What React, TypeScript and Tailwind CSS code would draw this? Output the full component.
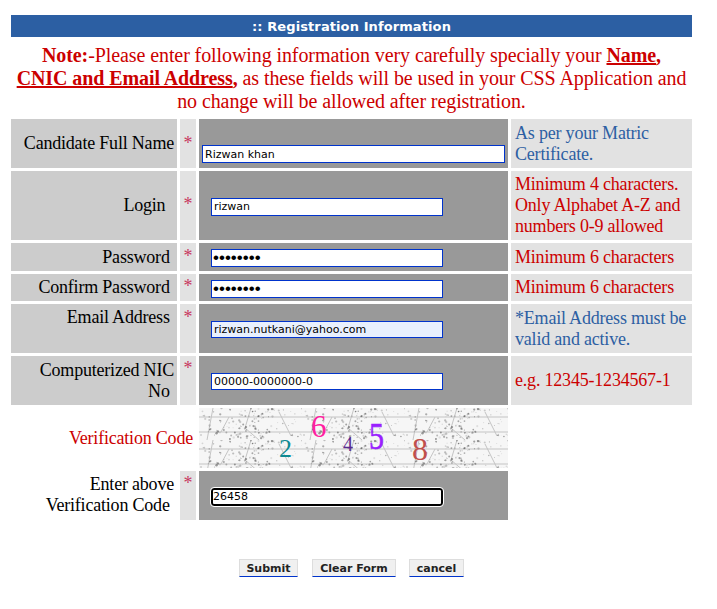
import type { ReactNode } from "react";

const serif = "font-['Liberation_Serif',serif]";
const sans = "font-['DejaVu_Sans',sans-serif]";

// cheap seeded noise for the captcha background tile
function noiseDots(count: number) {
  const dots: { x: number; y: number; r: number; o: number }[] = [];
  let seed = 4211;
  const next = () => {
    seed = (seed * 16807) % 2147483647;
    return seed / 2147483647;
  };
  for (let i = 0; i < count; i++) {
    const clustered = next() > 0.6;
    dots.push({
      x: clustered ? 30 + next() * 40 : next() * 103,
      y: next() * 31,
      r: 0.4 + next() * 0.8,
      o: 0.12 + next() * 0.5,
    });
  }
  return dots;
}

function Captcha() {
  return (
    <svg width="309" height="60" className="block">
      <defs>
        <pattern id="noise" width="103" height="32" patternUnits="userSpaceOnUse">
          <rect width="103" height="32" fill="#f6f6f6" />
          <path
            d="M0 9H103M0 24H103M14 0L8 32M52 0L46 20L60 32M80 4L92 28M30 9L22 24"
            stroke="#c4c4c4"
            strokeWidth="1"
            fill="none"
          />
          {noiseDots(150).map((d, i) => (
            <circle key={i} cx={d.x} cy={d.y} r={d.r} fill="#555" opacity={d.o} />
          ))}
        </pattern>
      </defs>
      <rect width="309" height="60" fill="url(#noise)" />
      <g fontFamily="'Liberation Serif', serif">
        <text x="80" y="49" fontSize="26" fill="#0f8a92">2</text>
        <text x="112" y="29" fontSize="31" fill="#ff1fa0">6</text>
        <text x="144" y="43" fontSize="20" fill="#5a2a90">4</text>
        <text
          x="170"
          y="41"
          fontSize="38"
          fill="#9a1fff"
          stroke="#9a1fff"
          strokeWidth="0.6"
          textLength="15"
          lengthAdjust="spacingAndGlyphs"
        >
          5
        </text>
        <text x="213" y="52" fontSize="32" fill="#c0504d">8</text>
      </g>
    </svg>
  );
}

function Input({
  value,
  className = "h-[17px] w-[232px]",
}: {
  value: string;
  className?: string;
}) {
  return (
    <input
      readOnly
      value={value}
      className={`block border border-[#0033cc] bg-white px-[2px] text-[11px] text-black outline-none ${sans} ${className}`}
    />
  );
}

// chrome draws the dots from the field's font, Liberation gets the reference's size
function PasswordInput() {
  return (
    <input
      readOnly
      type="password"
      value="password"
      className="block h-[18px] w-[232px] border border-[#0033cc] bg-white px-[1px] text-[17px] text-black outline-none font-['Liberation_Sans',sans-serif]"
    />
  );
}

function Label({ children, className = "items-center" }: { children: ReactNode; className?: string }) {
  return (
    <div className={`flex justify-end bg-[#cccccc] pr-[3px] text-right text-[18px] leading-[21px] tracking-[-0.2px] text-black ${className}`}>
      <span>{children}</span>
    </div>
  );
}

function Star({ className }: { className: string }) {
  return (
    <div className={`bg-[#e2e2e2] text-center text-[18px] leading-[21px] text-[#c8385f] ${className}`}>*</div>
  );
}

function Hint({ children, red = false }: { children: ReactNode; red?: boolean }) {
  return (
    <div
      className={`flex items-center bg-[#e2e2e2] pl-[4px] text-[18px] leading-[21px] tracking-[-0.2px] ${red ? "text-[#cc0000]" : "text-[#2d5fa3]"}`}
    >
      <span>{children}</span>
    </div>
  );
}

function Btn({ children, className }: { children: ReactNode; className: string }) {
  return (
    <button
      type="button"
      className={`h-[18px] border border-[#dddddd] border-b-[#0033cc] bg-[#f0f0f0] text-[11px] leading-none font-bold text-[#222222] ${sans} ${className}`}
    >
      {children}
    </button>
  );
}

export default function App() {
  return (
    <div className={`h-[609px] w-[717px] overflow-hidden bg-white px-[11px] pt-[15px] ${serif}`}>
      <div className={`flex h-[22px] w-[681px] items-center justify-center bg-[#2c5fa3] pt-[1px] text-[13px] font-bold tracking-[0.1px] text-white ${sans}`}>
        :: Registration Information
      </div>

      <p className="mt-[7px] w-[681px] text-center text-[20px] leading-[23px] tracking-[-0.09px] whitespace-nowrap text-[#cc0000]">
        <b>Note:</b>-Please enter following information very carefully specially your <u className="font-bold">Name</u>
        <b>,</b>
        <br />
        <u className="font-bold">CNIC and Email Address</u>
        <b>,</b> as these fields will be used in your CSS Application and
        <br />
        no change will be allowed after registration.
      </p>

      <div className="mt-[6px] grid w-[681px] grid-cols-[166px_16px_309px_181px] grid-rows-[49px_69px_28px_27px_49px_49px_60px_49px] gap-[3px]">
        <Label>Candidate Full Name</Label>
        <Star className="pt-[14px]" />
        <div className="flex items-end bg-[#999999] pb-[5px] pl-[3px]">
          <Input value="Rizwan khan" className="h-[18px] w-[303px]" />
        </div>
        <Hint>As per your Matric Certificate.</Hint>

        <Label>Login&nbsp;&nbsp;</Label>
        <Star className="pt-[23px]" />
        <div className="flex items-center bg-[#999999] pt-[2px] pl-[12px]">
          <Input value="rizwan" className="h-[18px] w-[232px]" />
        </div>
        <Hint red>Minimum 4 characters. Only Alphabet A-Z and numbers 0-9 allowed</Hint>

        <Label>Password&nbsp;</Label>
        <Star className="pt-[3px]" />
        <div className="flex items-center bg-[#999999] pt-[2px] pl-[12px]">
          <PasswordInput />
        </div>
        <Hint red>Minimum 6 characters</Hint>

        <Label>Confirm Password&nbsp;</Label>
        <Star className="pt-[2px]" />
        <div className="flex items-center bg-[#999999] pt-[2px] pl-[12px]">
          <PasswordInput />
        </div>
        <Hint red>Minimum 6 characters</Hint>

        <Label className="items-start pt-[3px]">Email Address&nbsp;</Label>
        <Star className="pt-[3px]" />
        <div className="flex items-end bg-[#999999] pb-[15px] pl-[12px]">
          <Input value="rizwan.nutkani@yahoo.com" className="h-[17px] w-[232px] !bg-[#e8f0fe]" />
        </div>
        <Hint>*Email Address must be valid and active.</Hint>

        <Label>Computerized NIC No&nbsp;</Label>
        <Star className="pt-[2px]" />
        <div className="flex items-end bg-[#999999] pb-[15px] pl-[12px]">
          <Input value="00000-0000000-0" />
        </div>
        <Hint red>e.g. 12345-1234567-1</Hint>

        <div className="col-span-2 flex items-center justify-end pr-[3px] text-[18px] tracking-[-0.2px] text-[#cc0000]">
          Verification Code
        </div>
        <Captcha />
        <div />

        <div className="flex items-center justify-end pr-[3px] pb-[2px] text-right text-[18px] leading-[21px] tracking-[-0.2px] text-black">
          <span>Enter above Verification Code&nbsp;</span>
        </div>
        <Star className="pt-[2px]" />
        <div className="flex items-center bg-[#999999] pt-[2px] pl-[12px]">
          <input
            readOnly
            value="26458"
            className={`block h-[18px] w-[232px] rounded-[3px] border-2 border-black bg-white px-0 text-[11px] text-black outline outline-1 outline-white ${sans}`}
          />
        </div>
        <div />
      </div>

      <div className="mt-[39px] flex">
        <Btn className="ml-[228px] w-[59px]">Submit</Btn>
        <Btn className="ml-[14px] w-[84px]">Clear Form</Btn>
        <Btn className="ml-[13px] w-[55px]">cancel</Btn>
      </div>
    </div>
  );
}
